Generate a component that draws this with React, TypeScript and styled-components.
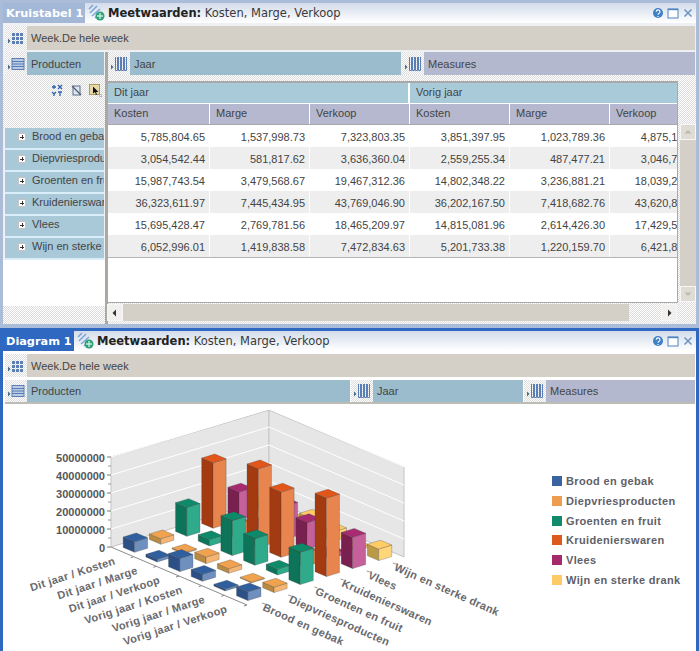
import React from "react";
import styled, { createGlobalStyle, css } from "styled-components";

const Global = createGlobalStyle`
  html, body { margin: 0; padding: 0; background: #fff; overflow: hidden; }
  * { box-sizing: border-box; }
`;

const stipple = css`
  background: repeating-conic-gradient(#fff 0 25%, #dcdcdc 0 50%) 0 0 / 2px 2px;
`;

const Page = styled.div`
  width: 699px;
  height: 651px;
  overflow: hidden;
  display: flex;
  flex-direction: column;
  font-family: "Liberation Sans", Arial, sans-serif;
  font-size: 11px;
  color: #444;
`;

const Panel = styled.section<{ $active?: boolean; $h: number }>`
  height: ${(p) => p.$h}px;
  flex: none;
  display: flex;
  flex-direction: column;
  overflow: hidden;
  background: ${(p) => (p.$active ? "#fff" : "#eef0f3")};
  border: 3px solid ${(p) => (p.$active ? "#2f68c0" : "#aabcd8")};
  border-bottom-width: ${(p) => (p.$active ? 0 : 4)}px;
`;

const Spacer = styled.div`
  height: 1px;
  flex: none;
  background: #fff;
`;

const TitleRow = styled.header`
  height: 20px;
  flex: none;
  display: flex;
  align-items: center;
  background: linear-gradient(#d3dcea, #fff);
`;

const TitleTag = styled.div<{ $active?: boolean; $w: number }>`
  width: ${(p) => p.$w}px;
  height: 100%;
  padding-left: 3px;
  display: flex;
  align-items: center;
  flex: none;
  color: #fff;
  background: ${(p) => (p.$active ? "#2f68c0" : "#a3b7d6")};
  font: bold 11.3px "DejaVu Sans", Verdana, sans-serif;
  white-space: nowrap;
  overflow: hidden;
`;

const TitleInfo = styled.div`
  flex: 1;
  display: flex;
  align-items: center;
  gap: 2px;
  padding-left: 3px;
  font: 11.5px "DejaVu Sans", Verdana, sans-serif;
  color: #3a3a3a;
  white-space: nowrap;
  b { color: #222; }
`;

const WindowButtons = styled.div`
  display: flex;
  align-items: center;
  gap: 3px;
  padding-right: 2px;
`;

const Bar = styled.div<{ $tone: "tan" | "blue" | "violet"; $w?: number; $grow?: boolean }>`
  height: 100%;
  display: flex;
  align-items: center;
  flex: ${(p) => (p.$grow ? "1" : "none")};
  width: ${(p) => (p.$w ? `${p.$w}px` : "auto")};
  background: ${(p) =>
    p.$tone === "tan" ? "#d4d0c8" : p.$tone === "blue" ? "#9abccd" : "#b4b8ce"};
  white-space: nowrap;
  overflow: hidden;
`;

const BarIcon = styled.span`
  ${stipple}
  width: 22px;
  height: 100%;
  flex: none;
  margin-right: 4px;
  display: flex;
  align-items: center;
  justify-content: center;
`;

const FilterRow = styled.div<{ $active?: boolean }>`
  height: ${(p) => (p.$active ? 23 : 24)}px;
  flex: none;
  margin: 3px 1px ${(p) => (p.$active ? 3 : 2)}px 2px;
  display: flex;
`;

const Body = styled.div`
  flex: 1;
  display: flex;
  min-height: 0;
`;

const LeftCol = styled.div`
  width: 102px;
  flex: none;
  display: flex;
  flex-direction: column;
`;

const Separator = styled.div`
  width: 3px;
  flex: none;
  background: #aaa9a2;
`;

const RightCol = styled.div`
  flex: 1;
  min-width: 0;
  display: flex;
  flex-direction: column;
`;

const AxisRow = styled.div`
  height: 23px;
  flex: none;
  display: flex;
  gap: 1px;
  padding-right: 1px;
`;

const ProductBar = styled.div`
  height: 23px;
  flex: none;
  margin: 0 1px 0 2px;
`;

const Corner = styled.div`
  ${stipple}
  height: 53px;
  flex: none;
  display: flex;
  justify-content: flex-end;
  align-items: flex-start;
  gap: 6px;
  padding: 9px 3px 0 0;
`;

const RowList = styled.div`
  flex: none;
  margin-left: 2px;
  margin-right: 1px;
`;

const RowLabel = styled.div`
  height: 22px;
  background: #a9c8d8;
  border-bottom: 2px solid #d9eef8;
  display: flex;
  align-items: center;
  padding: 0 0 4px 13px;
  gap: 6px;
  white-space: nowrap;
  overflow: hidden;
`;

const PlusBox = styled.span`
  width: 8px;
  height: 8px;
  flex: none;
  margin-top: 2px;
  background: #fff;
  border: 1px solid #c4c4c4;
  position: relative;
  &::before, &::after {
    content: "";
    position: absolute;
    background: #333;
  }
  &::before { left: 1px; right: 1px; top: 2.5px; height: 1px; }
  &::after { top: 1px; bottom: 1px; left: 2.5px; width: 1px; }
`;

const LeftFill = styled.div`
  flex: 1;
  background: #fff;
`;

const LeftFoot = styled.div`
  ${stipple}
  height: 18px;
  flex: none;
`;

const Content = styled.div`
  flex: 1;
  min-height: 0;
  display: grid;
  grid-template-columns: 570px 1fr;
  grid-template-rows: 228px 1fr;
  ${stipple}
`;

const TableBox = styled.div`
  grid-column: 1;
  grid-row: 1;
  margin-top: 6px;
  background: #fff;
  border-top: 2px solid #a9a9a9;
  border-right: 1px solid #a9a9a9;
  border-bottom: 1px solid #a9a9a9;
  overflow: hidden;
  height: 222px;
`;

const Grid = styled.div`
  width: 600px;
`;

const GroupRow = styled.div`
  display: flex;
  height: 21px;
  border-bottom: 1px solid #fff;
`;

const GroupCell = styled.div`
  width: 300px;
  flex: none;
  background: #a9cbd9;
  border-right: 2px solid #fff;
  padding: 0 0 3px 6px;
  display: flex;
  align-items: center;
  &:first-child { width: 302px; }
`;

const MeasureRow = styled.div`
  display: flex;
  height: 21px;
  border-bottom: 1px solid #a9a9a9;
`;

const MeasureCell = styled.div`
  width: 100px;
  flex: none;
  background: #b5b8ce;
  border-right: 1px solid #fff;
  padding: 0 0 2px 6px;
  display: flex;
  align-items: center;
  &:first-child { width: 102px; }
`;

const DataRow = styled.div`
  display: flex;
  height: 22px;
`;

const DataCell = styled.div<{ $striped: boolean }>`
  width: 100px;
  flex: none;
  text-align: right;
  line-height: 25px;
  padding-right: 4px;
  white-space: nowrap;
  overflow: hidden;
  background: ${(p) => (p.$striped ? "#eeeeee" : "#fff")};
  border-right: 1px solid #fff;
  &:first-child { width: 102px; }
`;

const EndLine = styled.div`
  height: 1px;
  background: #b5b5b5;
  width: 600px;
`;

const VScroll = styled.div`
  grid-column: 2;
  grid-row: 1;
  width: 16px;
  margin: 49px 0 0 2px;
  background: #d4d0c8;
  display: flex;
  flex-direction: column;
  justify-content: space-between;
  height: 178px;
`;

const ScrollBtn = styled.div<{ $w: number; $h: number; $tone?: "pale" }>`
  width: ${(p) => p.$w}px;
  height: ${(p) => p.$h}px;
  flex: none;
  display: flex;
  align-items: center;
  justify-content: center;
  background: ${(p) => (p.$tone === "pale" ? "#dfdcd6" : "#f1f0ee")};
  border: 1px solid #f7f7f5;
`;

const HScroll = styled.div`
  grid-column: 1;
  grid-row: 2;
  height: 17px;
  margin: 1px 0 0 -1px;
  display: flex;
  align-items: stretch;
  width: 570px;
`;

const Thumb = styled.div`
  width: 506px;
  flex: none;
  background: #d4d0c8;
`;

const HGap = styled.div`
  ${stipple}
  flex: 1;
`;

const AxisStrip = styled.div`
  height: 24px;
  flex: none;
  margin: 0 1px 0 2px;
  display: flex;
  gap: 1px;
  border-bottom: 2px solid #bdbdb6;
`;

const ChartArea = styled.div`
  flex: 1;
  min-height: 0;
  display: flex;
  background: #fff;
`;

const ChartSvg = styled.svg`
  width: 549px;
  height: 246px;
  flex: none;
  display: block;
`;

const Legend = styled.ul`
  list-style: none;
  margin: 0;
  padding: 69px 0 0 0;
  display: flex;
  flex-direction: column;
  gap: 5.8px;
`;

const LegendItem = styled.li`
  display: flex;
  align-items: center;
  gap: 4px;
  height: 14px;
  font-weight: bold;
  font-size: 11px;
  letter-spacing: 0.35px;
  color: #5f6168;
  white-space: nowrap;
`;

const Swatch = styled.span<{ $c: string }>`
  width: 10px;
  height: 10px;
  flex: none;
  background: ${(p) => p.$c};
`;

/* ---------- icons ---------- */

const Tri = () => <path d="M1 9.5 L3.5 12 L1 14.5 Z" fill="#4a6a8a" />;

const GridIcon = () => (
  <svg width="18" height="18" viewBox="0 0 18 18">
    <Tri />
    {[5, 9, 13].map((x) =>
      [3, 7, 11].map((y) => (
        <rect key={`${x}-${y}`} x={x} y={y + 1} width="3" height="3" fill="#5d7fb4" />
      ))
    )}
  </svg>
);

const RowsIcon = () => (
  <svg width="18" height="18" viewBox="0 0 18 18">
    <Tri />
    <rect x="5" y="3.5" width="12" height="11" fill="#b9cbe4" stroke="#5b7eb4" />
    <path d="M5 6.5h12M5 9h12M5 11.5h12" stroke="#5b7eb4" />
  </svg>
);

const ColsIcon = () => (
  <svg width="18" height="18" viewBox="0 0 18 18">
    <Tri />
    <path
      d="M5.5 2v13.5h2V2M8.5 2v13.5h2V2M11.5 2v13.5h2V2M14.5 2v13.5h2V2"
      fill="none"
      stroke="#5b7eb4"
    />
  </svg>
);

const MeasureIcon = () => (
  <svg width="18" height="18" viewBox="0 0 18 18">
    <path d="M1 5 L5 1 M2 9 L9 2 M4 12 L12 5 M7 14 L11 10" stroke="#7ea6d6" strokeWidth="1.6" />
    <circle cx="12" cy="12" r="4.5" fill="#2f9f78" />
    <path d="M12 9v6M9 12h6" stroke="#bff0dc" strokeWidth="1.4" />
  </svg>
);

const WinIcons = () => (
  <WindowButtons>
    <svg width="12" height="12" viewBox="0 0 12 12">
      <circle cx="6" cy="6" r="5" fill="#3f7fc4" />
      <path d="M4.2 4.8a1.9 1.9 0 1 1 2.6 1.7c-.6.3-.8.6-.8 1.2M6 9v.9" fill="none" stroke="#fff" strokeWidth="1.1" />
    </svg>
    <svg width="12" height="12" viewBox="0 0 12 12">
      <rect x="1" y="2" width="10" height="9" fill="#fff" stroke="#4d83bf" />
      <path d="M1 2.5h10" stroke="#4d83bf" strokeWidth="1.4" />
    </svg>
    <svg width="12" height="12" viewBox="0 0 12 12">
      <path d="M2.5 2.5l7 7M9.5 2.5l-7 7" stroke="#6e97c4" strokeWidth="1.6" />
    </svg>
  </WindowButtons>
);

const SwapIcon = () => (
  <svg width="13" height="13" viewBox="0 0 13 13">
    <path d="M1 3h4M3 1v4M7 1l4 4M11 1l-4 4" stroke="#2f62ad" strokeWidth="1.3" fill="none" />
    <path d="M1 8l2 2 2-2M3 10v2M7 8h4M9 8v4" stroke="#2f62ad" strokeWidth="1.3" fill="none" />
  </svg>
);

const NoFilterIcon = () => (
  <svg width="13" height="13" viewBox="0 0 13 13">
    <rect x="3" y="2" width="7" height="9" fill="#dfe6f0" stroke="#5a6d88" />
    <path d="M2 2l9 9" stroke="#4a5d78" strokeWidth="1.2" />
  </svg>
);

const CursorIcon = () => (
  <svg width="13" height="13" viewBox="0 0 13 13">
    <rect x="0.5" y="0.5" width="10" height="10" fill="#e8d9a8" stroke="#b09a60" />
    <path d="M4 2.5v7l2-1.5 1 3 1-.5-1-2.5h2.5z" fill="#111" />
    <path d="M10 12h3M12 10v3" stroke="#999" strokeDasharray="1 1" />
  </svg>
);

const Arrow = ({ dir, c = "#333" }: { dir: "l" | "r" | "u" | "d"; c?: string }) => {
  const d = {
    l: "M6 1.5 L2.5 5 L6 8.5 Z",
    r: "M4 1.5 L7.5 5 L4 8.5 Z",
    u: "M1.5 6.5 L5 3 L8.5 6.5 Z",
    d: "M1.5 3.5 L5 7 L8.5 3.5 Z",
  }[dir];
  return (
    <svg width="10" height="10" viewBox="0 0 10 10">
      <path d={d} fill={c} />
    </svg>
  );
};

/* ---------- data ---------- */

const products = [
  "Brood en gebak",
  "Diepvriesproducten",
  "Groenten en fruit",
  "Kruidenierswaren",
  "Vlees",
  "Wijn en sterke drank",
];

const tableRows = [
  ["5,785,804.65", "1,537,998.73", "7,323,803.35", "3,851,397.95", "1,023,789.36", "4,875,187.31"],
  ["3,054,542.44", "581,817.62", "3,636,360.04", "2,559,255.34", "487,477.21", "3,046,732.55"],
  ["15,987,743.54", "3,479,568.67", "19,467,312.36", "14,802,348.22", "3,236,881.21", "18,039,229.43"],
  ["36,323,611.97", "7,445,434.95", "43,769,046.90", "36,202,167.50", "7,418,682.76", "43,620,850.26"],
  ["15,695,428.47", "2,769,781.56", "18,465,209.97", "14,815,081.96", "2,614,426.30", "17,429,508.26"],
  ["6,052,996.01", "1,419,838.58", "7,472,834.63", "5,201,733.38", "1,220,159.70", "6,421,893.08"],
];

const measures = ["Kosten", "Marge", "Verkoop", "Kosten", "Marge", "Verkoop"];

const xLabels = [
  "Dit jaar / Kosten",
  "Dit jaar / Marge",
  "Dit jaar / Verkoop",
  "Vorig jaar / Kosten",
  "Vorig jaar / Marge",
  "Vorig jaar / Verkoop",
];

const series = [
  { top: "#2f5f9f", left: "#2c4f86", right: "#6f90bf", legend: "#3a649f" },
  { top: "#f0a24f", left: "#b98a42", right: "#f5b673", legend: "#ee9d50" },
  { top: "#0d8a6a", left: "#0e7459", right: "#2fab8c", legend: "#118a6c" },
  { top: "#e2561a", left: "#a33a10", right: "#e8854f", legend: "#dc5a1e" },
  { top: "#a82a70", left: "#7a2050", right: "#c5609a", legend: "#a52a6c" },
  { top: "#ffcc66", left: "#bb9a45", right: "#ffd67a", legend: "#fdca64" },
];

const toMillions = (s: string) => parseFloat(s.replace(/,/g, "")) / 1e6;

const O = { x: 111, y: 547 };
const U = { x: 136 / 6, y: 58 / 6 };
const V = { x: 157 / 6, y: -48 / 6 };
const SCALE = 1.8;

const pts = (list: [number, number][]) => list.map((p) => p.join(",")).join(" ");

const Bar3D = ({ i, j, v }: { i: number; j: number; v: number }) => {
  const cx = O.x + U.x * (i + 0.5) + V.x * (j + 0.5);
  const cy = O.y + U.y * (i + 0.5) + V.y * (j + 0.5);
  const hu = { x: U.x * 0.25, y: U.y * 0.25 };
  const hv = { x: V.x * 0.25, y: V.y * 0.25 };
  const h = v * SCALE;
  const L: [number, number] = [cx - hu.x - hv.x, cy - hu.y - hv.y];
  const B: [number, number] = [cx - hu.x + hv.x, cy - hu.y + hv.y];
  const R: [number, number] = [cx + hu.x + hv.x, cy + hu.y + hv.y];
  const F: [number, number] = [cx + hu.x - hv.x, cy + hu.y - hv.y];
  const up = (p: [number, number]): [number, number] => [p[0], p[1] - h];
  const c = series[j];
  return (
    <g stroke="#3a3a3a" strokeOpacity="0.45" strokeWidth="0.6" strokeLinejoin="round">
      <polygon points={pts([L, F, up(F), up(L)])} fill={c.left} />
      <polygon points={pts([F, R, up(R), up(F)])} fill={c.right} />
      <polygon points={pts([up(L), up(B), up(R), up(F)])} fill={c.top} />
    </g>
  );
};

const Chart = () => {
  const bars: React.ReactNode[] = [];
  for (let j = 5; j >= 0; j--) {
    for (let i = 0; i < 6; i++) {
      bars.push(<Bar3D key={`${i}-${j}`} i={i} j={j} v={toMillions(tableRows[j][i])} />);
    }
  }
  const yTicks = [0, 1, 2, 3, 4, 5];
  const labelStyle = {
    fontFamily: '"Liberation Sans", Arial, sans-serif',
    fontWeight: 700,
    fontSize: 11,
    letterSpacing: 0.3,
    fill: "#6a6a6e",
  };
  return (
    <ChartSvg viewBox="3 405 549 246">
      <polygon points="111,547 269,499 269,410 111,457" fill="#e6e6e6" stroke="#c4c4c4" />
      <polygon points="269,499 404,557 404,467 269,410" fill="#e6e6e6" stroke="#c4c4c4" />
      {yTicks.slice(1).map((t) => {
        const d = t * 18;
        return (
          <g key={t} stroke="#fff">
            <line x1="111" y1={547 - d} x2="269" y2={499 - d} />
            <line x1="269" y1={499 - d} x2="404" y2={557 - d} />
          </g>
        );
      })}
      <line x1="111" y1="547" x2="247" y2="605" stroke="#8c8c8c" />
      {yTicks.map((t) => (
        <g key={t}>
          <line x1="107" y1={547 - t * 18} x2="111" y2={547 - t * 18} stroke="#777" />
          {t < 5 && <line x1="108" y1={538 - t * 18} x2="111" y2={538 - t * 18} stroke="#999" />}
          <text
            x="105"
            y={552 - t * 18}
            textAnchor="end"
            style={{ ...labelStyle, fill: "#55565a", fontSize: 11, letterSpacing: 0 }}
          >
            {t === 0 ? "0" : `${t * 10}000000`}
          </text>
        </g>
      ))}
      {xLabels.map((_, k) => (
        <line
          key={k}
          x1={O.x + U.x * (k + 1)}
          y1={O.y + U.y * (k + 1)}
          x2={O.x + U.x * (k + 1) - 3}
          y2={O.y + U.y * (k + 1) + 1}
          stroke="#888"
        />
      ))}
      {products.map((_, k) => (
        <line
          key={k}
          x1={247 + V.x * (k + 0.5) + 2}
          y1={605 + V.y * (k + 0.5) + 2}
          x2={247 + V.x * (k + 0.5) + 5}
          y2={605 + V.y * (k + 0.5) + 3}
          stroke="#999"
        />
      ))}
      {bars}
      {xLabels.map((t, k) => (
        <text
          key={t}
          textAnchor="end"
          transform={`translate(${116 + k * 22.4} ${564 + k * 9.6}) rotate(-18)`}
          style={labelStyle}
        >
          {t}
        </text>
      ))}
      {products.map((t, k) => (
        <text
          key={t}
          transform={`translate(${262 + k * 26.3} ${610 - k * 8}) rotate(24)`}
          style={labelStyle}
        >
          {t}
        </text>
      ))}
    </ChartSvg>
  );
};

export default function App() {
  return (
    <Page>
      <Global />
      <Panel $h={328}>
        <TitleRow>
          <TitleTag $w={82}>Kruistabel 1</TitleTag>
          <TitleInfo>
            <MeasureIcon />
            <span>
              <b>Meetwaarden:</b> Kosten, Marge, Verkoop
            </span>
          </TitleInfo>
          <WinIcons />
        </TitleRow>
        <FilterRow>
          <Bar $tone="tan" $grow>
            <BarIcon><GridIcon /></BarIcon>
            Week.De hele week
          </Bar>
        </FilterRow>
        <Body>
          <LeftCol>
            <ProductBar>
              <Bar $tone="blue">
                <BarIcon><RowsIcon /></BarIcon>
                Producten
              </Bar>
            </ProductBar>
            <Corner>
              <SwapIcon />
              <NoFilterIcon />
              <CursorIcon />
            </Corner>
            <RowList>
              {products.map((p) => (
                <RowLabel key={p}>
                  <PlusBox />
                  {p}
                </RowLabel>
              ))}
            </RowList>
            <LeftFill />
            <LeftFoot />
          </LeftCol>
          <Separator />
          <RightCol>
            <AxisRow>
              <Bar $tone="blue" $grow>
                <BarIcon><ColsIcon /></BarIcon>
                Jaar
              </Bar>
              <Bar $tone="violet" $grow>
                <BarIcon><ColsIcon /></BarIcon>
                Measures
              </Bar>
            </AxisRow>
            <Content>
              <TableBox>
                <Grid>
                  <GroupRow>
                    <GroupCell>Dit jaar</GroupCell>
                    <GroupCell>Vorig jaar</GroupCell>
                  </GroupRow>
                  <MeasureRow>
                    {measures.map((m, i) => (
                      <MeasureCell key={i}>{m}</MeasureCell>
                    ))}
                  </MeasureRow>
                  {tableRows.map((r, ri) => (
                    <DataRow key={ri}>
                      {r.map((c, ci) => (
                        <DataCell key={ci} $striped={ri % 2 === 1}>{c}</DataCell>
                      ))}
                    </DataRow>
                  ))}
                  <EndLine />
                </Grid>
              </TableBox>
              <VScroll>
                <ScrollBtn $w={16} $h={16} $tone="pale"><Arrow dir="u" c="#bdbab2" /></ScrollBtn>
                <ScrollBtn $w={16} $h={16} $tone="pale"><Arrow dir="d" c="#bdbab2" /></ScrollBtn>
              </VScroll>
              <HScroll>
                <ScrollBtn $w={16} $h={17}><Arrow dir="l" /></ScrollBtn>
                <Thumb />
                <HGap />
                <ScrollBtn $w={16} $h={17}><Arrow dir="r" /></ScrollBtn>
              </HScroll>
            </Content>
          </RightCol>
        </Body>
      </Panel>
      <Panel $active $h={323}>
        <TitleRow>
          <TitleTag $active $w={71}>Diagram 1</TitleTag>
          <TitleInfo>
            <MeasureIcon />
            <span>
              <b>Meetwaarden:</b> Kosten, Marge, Verkoop
            </span>
          </TitleInfo>
          <WinIcons />
        </TitleRow>
        <FilterRow $active>
          <Bar $tone="tan" $grow>
            <BarIcon><GridIcon /></BarIcon>
            Week.De hele week
          </Bar>
        </FilterRow>
        <AxisStrip>
          <Bar $tone="blue" $w={345}>
            <BarIcon><RowsIcon /></BarIcon>
            Producten
          </Bar>
          <Bar $tone="blue" $w={172}>
            <BarIcon><ColsIcon /></BarIcon>
            Jaar
          </Bar>
          <Bar $tone="violet" $grow>
            <BarIcon><ColsIcon /></BarIcon>
            Measures
          </Bar>
        </AxisStrip>
        <Spacer />
        <ChartArea>
          <Chart />
          <Legend>
            {products.map((p, i) => (
              <LegendItem key={p}>
                <Swatch $c={series[i].legend} />
                {p}
              </LegendItem>
            ))}
          </Legend>
        </ChartArea>
      </Panel>
    </Page>
  );
}
